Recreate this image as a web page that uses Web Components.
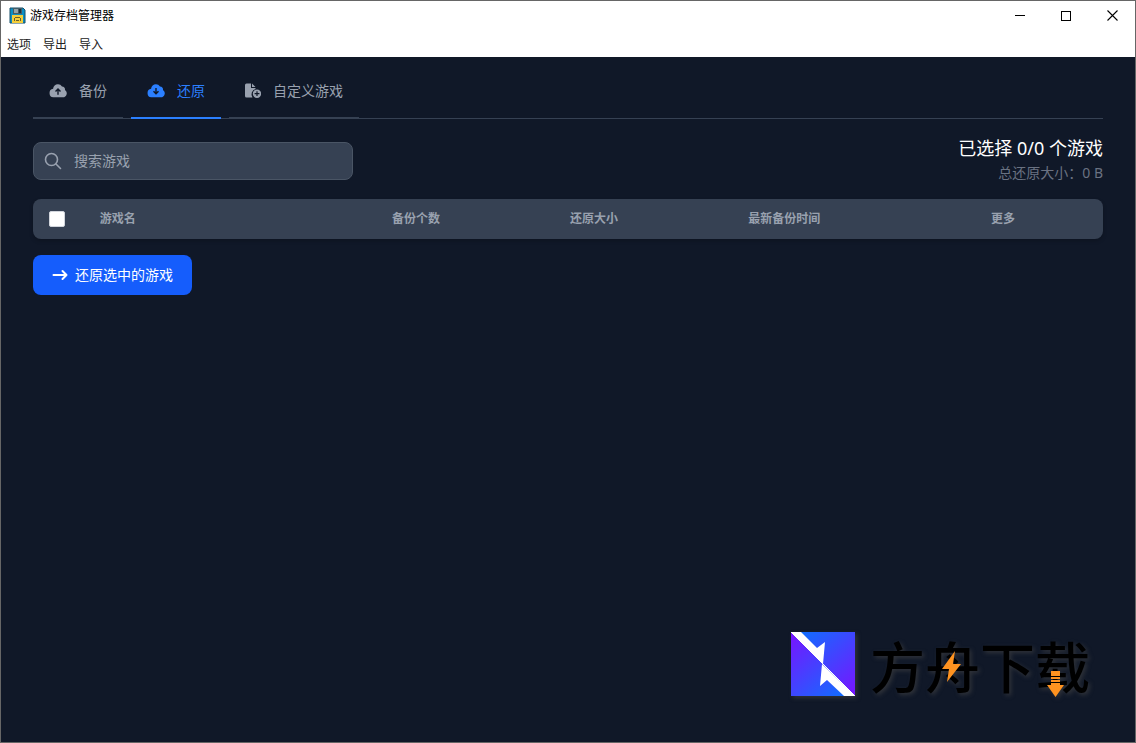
<!DOCTYPE html>
<html lang="zh-CN">
<head>
<meta charset="utf-8">
<title>游戏存档管理器</title>
<style>
  body {
    margin: 0;
    font-family: "Noto Sans", "Noto Sans CJK SC", sans-serif;
    background: #101828;
  }
</style>
</head>
<body>
<save-manager></save-manager>

<script>
(function() {
  'use strict';

  // Registers an element whose shadow root is cloned from the given markup
  function define(name, html, setup) {
    const template = document.createElement('template');
    template.innerHTML = html;
    customElements.define(name, class extends HTMLElement {
      constructor() {
        super();
        this.attachShadow({ mode: 'open' });
        this.shadowRoot.appendChild(template.content.cloneNode(true));
      }
      connectedCallback() { if (setup) setup(this, this.shadowRoot); }
    });
  }

  const ICONS = {
    'cloud-up': `<svg width="18" height="18" viewBox="0 0 18 18"><path fill="currentColor" fill-rule="evenodd" d="M9 2.3A4.8 4.8 0 0 0 4.1 6.8 4.3 4.3 0 0 0 4.3 15.3h9.5a4 4 0 0 0 2.2-7.3 3.3 3.3 0 0 0-3-3.6A4.8 4.8 0 0 0 9 2.3zM9 6l3 3-1 1-1.3-1.2v3.9H8.3V8.8L7 10 6 9z"/></svg>`,
    'cloud-down': `<svg width="18" height="18" viewBox="0 0 18 18"><path fill="currentColor" fill-rule="evenodd" d="M9 2.3A4.8 4.8 0 0 0 4.1 6.8 4.3 4.3 0 0 0 4.3 15.3h9.5a4 4 0 0 0 2.2-7.3 3.3 3.3 0 0 0-3-3.6A4.8 4.8 0 0 0 9 2.3zM8.3 6h1.4v3.9L11 8.7l1 1-3 3-3-3 1-1 1.3 1.2z"/></svg>`,
    'file-plus': `<svg width="16" height="18" viewBox="0 0 16 18"><path fill="currentColor" d="M0 3a1.5 1.5 0 0 1 1.500-1.500H6V6h4.500v1A5.500 5.500 0 0 0 7.500 15.500H1.500A1.500 1.500 0 0 1 0 14zM7 1.500 10.500 5H7z"/><path fill="currentColor" fill-rule="evenodd" d="M12 7.500a4.200 4.200 0 1 1 0 8.400 4.200 4.200 0 0 1 0-8.400zM11.400 9.300v1.800H9.600v1.200h1.800v1.800h1.200v-1.800h1.800v-1.200h-1.800V9.300z"/></svg>`
  };

  define('title-bar', `
    <style>
      :host{display:flex;align-items:center;height:29px;padding-left:8px}
      .name{flex:1;font-size:12px;line-height:16px;color:#000;margin-left:4px}
      button{display:flex;align-items:center;justify-content:center;width:46px;height:29px;padding:0;border:0;background:none}
      button:hover{background:#e5e5e5}
    </style>
    <svg width="17" height="17" viewBox="0 0 17 17" aria-hidden="true">
      <path d="M1 1h13l2 2v13H1z" fill="#0b8fc4" stroke="#174e68"/>
      <path d="M4 1h9v6H4z" fill="#435b66"/><path d="M5 2h4v4H5z" fill="#93a3a8"/><path d="M10 2h2v4h-2z" fill="#1b303b"/>
      <path d="M3 8h11v8H3z" fill="#f4ce3a"/><path d="M6 10h5v1H6zM5 11h1v3H5zM11 11h1v3h-1zM7 13h3v1H7z" fill="#695e29"/>
    </svg>
    <span class="name"><slot></slot></span>
    <button aria-label="最小化"><svg width="10" height="11" shape-rendering="crispEdges"><path d="M0 5h10v1H0z"/></svg></button>
    <button aria-label="最大化"><svg width="10" height="10" shape-rendering="crispEdges"><path d="M.5.5h9v9h-9z" fill="none" stroke="#000"/></svg></button>
    <button aria-label="关闭"><svg width="11" height="11"><path d="M.5.5l10 10M10.500.5l-10 10" fill="none" stroke="#000" stroke-width="1.100"/></svg></button>`);

  define('menu-bar', `
    <style>
      :host{display:flex;gap:12px;padding:7px 6px 4px}
      ::slotted(button){border:0;padding:0;background:none;color:#222;font:12px/16px "Noto Sans","Noto Sans CJK SC",sans-serif}
    </style>
    <slot></slot>`);

  define('tab-bar', `
    <style>
      :host{display:block;box-shadow:inset 0 -1px #364153}
      nav{display:flex;gap:8px}
    </style>
    <nav role="tablist"><slot></slot></nav>`);

  define('tab-item', `
    <style>
      :host{display:block;color:#99a1af}
      button{display:flex;align-items:center;gap:12px;padding:16px;border:0;border-bottom:2px solid #364153;background:none;color:inherit;font:inherit;font-size:14px;line-height:20px}
      :host([active]){color:#2b7fff}
      :host([active]) button{border-color:#2b7fff}
      .icon{display:flex}
    </style>
    <button role="tab"><span class="icon"></span><span><slot></slot></span></button>`,
  (host, root) => {
    root.querySelector('.icon').innerHTML = ICONS[host.getAttribute('icon')];
    root.querySelector('button').setAttribute('aria-selected', host.hasAttribute('active'));
  });

  define('search-box', `
    <style>
      :host{display:block;flex:0 1 320px}
      label{display:flex;align-items:center;gap:12px;box-sizing:border-box;height:38px;padding:0 10px;border:1px solid #4a5565;border-radius:8px;background:#364153;color:#99a1af}
      input{flex:1;min-width:0;padding:0;border:0;outline:0;background:none;color:#fff;font:inherit;font-size:14px;line-height:20px}
      input::placeholder{color:#99a1af;opacity:1}
    </style>
    <label>
      <svg width="18" height="18" viewBox="0 0 18 18" fill="none" stroke="currentColor" stroke-width="1.600" aria-hidden="true"><circle cx="7.500" cy="7.500" r="6"/><path d="M12 12l4.500 4.500" stroke-linecap="round"/></svg>
      <input type="text">
    </label>`,
  (host, root) => {
    const input = root.querySelector('input');
    input.placeholder = host.getAttribute('placeholder');
    input.setAttribute('aria-label', input.placeholder);
  });

  define('restore-summary', `
    <style>
      :host{display:block;text-align:right;color:#fff;font-size:18px;line-height:28px}
      .size{color:#6a7282;font-size:14px;line-height:22px}
    </style>
    <div><slot></slot></div>
    <div class="size"><slot name="size"></slot></div>`);

  define('game-table', `
    <style>
      :host{display:block;border-radius:8px;overflow:hidden;background:#364153;box-shadow:0 2px 4px #0003}
      table{width:100%;table-layout:fixed;border-collapse:collapse;color:#99a1af;font-size:12px;line-height:16px;text-align:left}
      th{box-sizing:border-box;padding:12px 24px;font-weight:700}
      .check{width:4%;padding:0 0 0 16px}
      .name{width:27.3%}
      .count,.size{width:16.65%}
      .time{width:22.7%}
      input{display:block;appearance:none;width:16px;height:16px;margin:0;border:1px solid #d1d5dc;border-radius:2px;background:#fff}
      input:checked{background:#155dfc}
    </style>
    <table>
      <thead>
        <tr>
          <th class="check"><input type="checkbox" aria-label="全选"></th>
          <th class="name">游戏名</th>
          <th class="count">备份个数</th>
          <th class="size">还原大小</th>
          <th class="time">最新备份时间</th>
          <th>更多</th>
        </tr>
      </thead>
      <tbody></tbody>
    </table>`);

  define('action-button', `
    <style>
      :host{display:inline-block}
      button{display:flex;align-items:center;gap:6px;padding:10px 19px;border:0;border-radius:8px;background:#155dfc;color:#fff;font:inherit;font-size:14px;line-height:20px}
      button:hover{background:#1447e6}
    </style>
    <button>
      <svg width="17" height="14" viewBox="0 0 17 14" fill="none" stroke="currentColor" stroke-width="2" stroke-linecap="round" stroke-linejoin="round" aria-hidden="true"><path d="M1.500 7h13M10.500 3l4 4-4 4"/></svg>
      <span><slot></slot></span>
    </button>`);

  define('site-mark', `
    <style>
      :host{display:flex;align-items:center;gap:15px;filter:drop-shadow(2px 2px 2px #4449)}
      .logo{display:block}
      .name{position:relative;color:#000;font:500 55px/60px "Noto Sans CJK SC",sans-serif}
      .bolt{position:absolute;left:72px;top:17px}
      .arrow{position:absolute;left:177px;top:37px}
    </style>
    <svg class="logo" width="64" height="64" viewBox="0 0 64 64" aria-hidden="true">
      <defs>
        <linearGradient id="upper" x1="0.200" y1="0" x2="1" y2="0.900"><stop offset="0" stop-color="#126cff"/><stop offset="1" stop-color="#7418ff"/></linearGradient>
        <linearGradient id="lower" x1="0" y1="0.100" x2="0.800" y2="1"><stop offset="0" stop-color="#7418ff"/><stop offset="1" stop-color="#126cff"/></linearGradient>
      </defs>
      <path d="M0 0h64v64H0z" fill="url(#upper)"/>
      <path d="M0 0v64h64z" fill="url(#lower)"/>
      <path d="M0 0h10l16 16 8-6-2 22zM64 64H53L36 48l-7 6 2-22z" fill="#fff"/>
      <path d="M0 0 64 64" stroke="#fff"/>
    </svg>
    <div class="name">
      <slot></slot>
      <svg class="bolt" width="19" height="32" viewBox="0 0 19 32" aria-hidden="true"><path d="M13 0 0 18h7L5 31l14-18h-8z" fill="#ff9320"/></svg>
      <svg class="arrow" width="17" height="26" viewBox="0 0 17 26" aria-hidden="true"><path d="M4 0h9v5H4zM4 6h9v2H4zM4 9h9v2H4zM4 12h9v2h4l-8.500 12L0 14h4z" fill="#ff9320"/></svg>
    </div>`);

  define('save-manager', `
    <style>
      :host{display:flex;flex-direction:column;position:relative;box-sizing:border-box;min-height:100vh;border:1px solid #666;background:#101828}
      header{background:#fff}
      main{flex:1;padding:8px 32px 32px}
      .toolbar{display:flex;align-items:center;justify-content:space-between;margin:15px 0}
      search-box{margin-top:4px}
      .actions{margin-top:16px}
      site-mark{position:absolute;right:45px;bottom:46px}
    </style>
    <header>
      <title-bar>游戏存档管理器</title-bar>
      <menu-bar>
        <button>选项</button>
        <button>导出</button>
        <button>导入</button>
      </menu-bar>
    </header>
    <main>
      <tab-bar>
        <tab-item icon="cloud-up">备份</tab-item>
        <tab-item icon="cloud-down" active>还原</tab-item>
        <tab-item icon="file-plus">自定义游戏</tab-item>
      </tab-bar>
      <div class="toolbar">
        <search-box placeholder="搜索游戏"></search-box>
        <restore-summary>已选择 0/0 个游戏<span slot="size">总还原大小：0 B</span></restore-summary>
      </div>
      <game-table></game-table>
      <div class="actions"><action-button>还原选中的游戏</action-button></div>
    </main>
    <site-mark>方舟下载</site-mark>`);
}());
</script>
</body>
</html>
